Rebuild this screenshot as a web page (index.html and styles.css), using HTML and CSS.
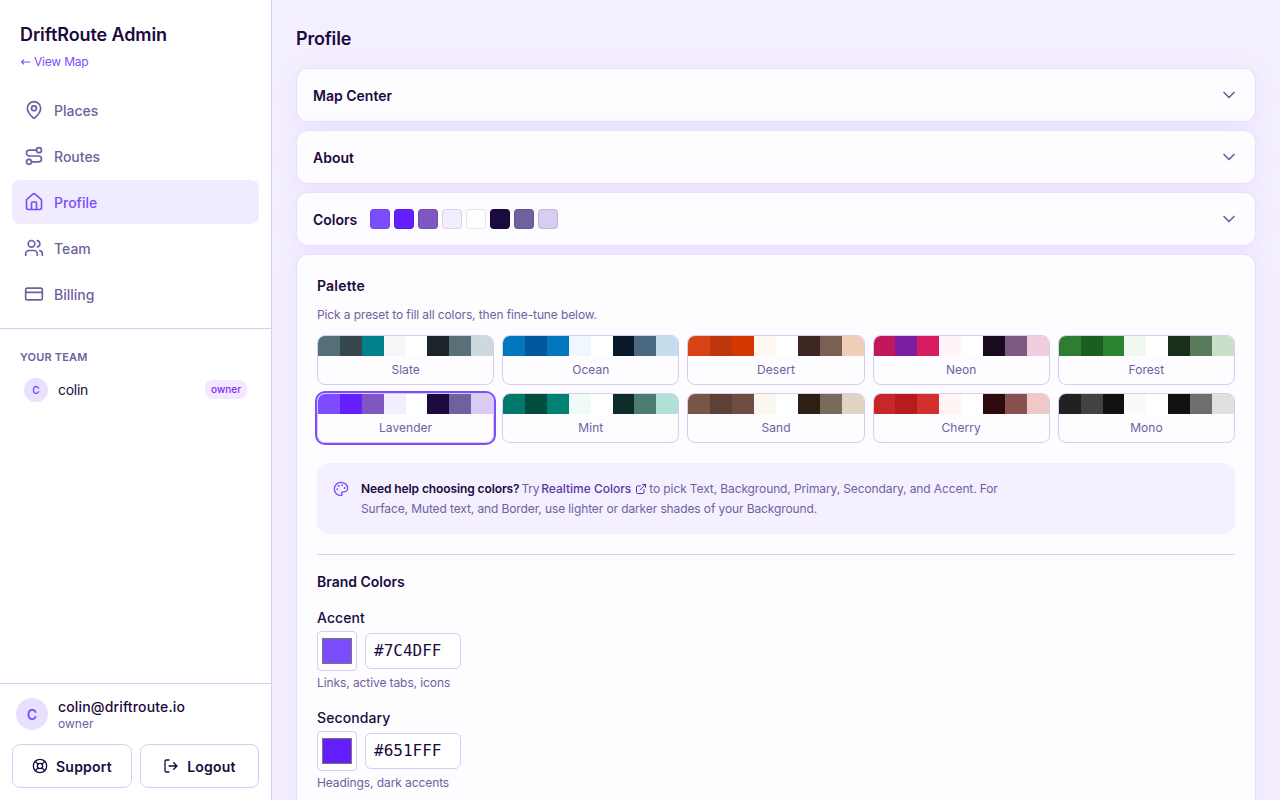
FILE: index.html
```html
<!DOCTYPE html>
<html lang="en">
<head>
<meta charset="utf-8">
<title>DriftRoute Admin</title>
<link rel="stylesheet" href="styles.css">
</head>
<body>
<div class="app">
  <aside class="sidebar">
    <header class="brand">
      <h1 class="brand-name">DriftRoute Admin</h1>
      <a class="view-map" href="#"><svg class="arrow" viewBox="0 0 11 10"><path d="M10.500 5H1.500M4 2.700 1.500 5 4 7.300"/></svg>View Map</a>
    </header>
    <nav class="nav">
      <a class="nav-item" href="#"><svg class="icon" viewBox="0 0 24 24"><path d="M20 10c0 4.993-5.539 10.193-7.399 11.799a1 1 0 0 1-1.202 0C9.539 20.193 4 14.993 4 10a8 8 0 0 1 16 0"/><circle cx="12" cy="10" r="3"/></svg>Places</a>
      <a class="nav-item" href="#"><svg class="icon" viewBox="0 0 24 24"><circle cx="6" cy="19" r="3"/><path d="M9 19h8.500a3.500 3.500 0 0 0 0-7h-11a3.500 3.500 0 0 1 0-7H15"/><circle cx="18" cy="5" r="3"/></svg>Routes</a>
      <a class="nav-item active" href="#"><svg class="icon" viewBox="0 0 24 24"><path d="M15 21v-8a1 1 0 0 0-1-1h-4a1 1 0 0 0-1 1v8"/><path d="M3 10a2 2 0 0 1 .709-1.528l7-5.999a2 2 0 0 1 2.582 0l7 5.999A2 2 0 0 1 21 10v9a2 2 0 0 1-2 2H5a2 2 0 0 1-2-2z"/></svg>Profile</a>
      <a class="nav-item" href="#"><svg class="icon" viewBox="0 0 24 24"><path d="M16 21v-2a4 4 0 0 0-4-4H6a4 4 0 0 0-4 4v2"/><circle cx="9" cy="7" r="4"/><path d="M22 21v-2a4 4 0 0 0-3-3.870M16 3.130a4 4 0 0 1 0 7.750"/></svg>Team</a>
      <a class="nav-item" href="#"><svg class="icon" viewBox="0 0 24 24"><rect x="2" y="5" width="20" height="14" rx="2"/><path d="M2 10h20"/></svg>Billing</a>
    </nav>
    <section class="team">
      <h2 class="team-title">YOUR TEAM</h2>
      <div class="member"><span class="avatar small">C</span><span class="member-name">colin</span><span class="badge">owner</span></div>
    </section>
    <footer class="account">
      <div class="user">
        <span class="avatar">C</span>
        <div class="user-text"><span class="email">colin@driftroute.io</span><span class="role">owner</span></div>
      </div>
      <div class="actions">
        <button class="btn"><svg class="icon sm" viewBox="0 0 24 24"><circle cx="12" cy="12" r="10"/><path d="m4.930 4.930 4.240 4.240M14.830 9.170l4.240-4.240M14.830 14.830l4.240 4.240M9.170 14.830l-4.240 4.240"/><circle cx="12" cy="12" r="4"/></svg>Support</button>
        <button class="btn"><svg class="icon sm" viewBox="0 0 24 24"><path d="M9 21H5a2 2 0 0 1-2-2V5a2 2 0 0 1 2-2h4M16 17l5-5-5-5M21 12H9"/></svg>Logout</button>
      </div>
    </footer>
  </aside>
  <main class="main">
    <h2 class="page-title">Profile</h2>
    <div class="stack">
      <div class="accordion"><span>Map Center</span><svg class="icon chev" viewBox="0 0 24 24"><path d="m6 9 6 6 6-6"/></svg></div>
      <div class="accordion"><span>About</span><svg class="icon chev" viewBox="0 0 24 24"><path d="m6 9 6 6 6-6"/></svg></div>
      <div class="accordion"><span>Colors</span><span class="chips" data-colors="#7c4dff #651fff #7e57c2 #f3eeff #ffffff #1a0a3e #7060a0 #d8ccf4"></span><svg class="icon chev" viewBox="0 0 24 24"><path d="m6 9 6 6 6-6"/></svg></div>
      <section class="panel">
        <h3 class="section-title">Palette</h3>
        <p class="hint">Pick a preset to fill all colors, then fine-tune below.</p>
        <div class="presets">
          <button class="preset"><span class="strip" data-colors="#546e7a #37474f #00808a #f5f7f8 #ffffff #1c2429 #5a7078 #cfd8dc"></span><span class="preset-name">Slate</span></button>
          <button class="preset"><span class="strip" data-colors="#0277bd #01579b #0277bd #f0f7ff #ffffff #0a1929 #4a6880 #c5dded"></span><span class="preset-name">Ocean</span></button>
          <button class="preset"><span class="strip" data-colors="#d84315 #bf360c #d63600 #fff8f0 #ffffff #3e2723 #7b5e54 #f0ceb8"></span><span class="preset-name">Desert</span></button>
          <button class="preset"><span class="strip" data-colors="#c2185b #7b1fa2 #d81b60 #fff5f9 #ffffff #1a0a1e #7d5a82 #f0cee0"></span><span class="preset-name">Neon</span></button>
          <button class="preset"><span class="strip" data-colors="#2e7d32 #1b5e20 #2a8432 #f1f8f2 #ffffff #1b2e1c #5a7a5c #c8e0c8"></span><span class="preset-name">Forest</span></button>
          <button class="preset selected"><span class="strip" data-colors="#7c4dff #651fff #7e57c2 #f3eeff #ffffff #1a0a3e #7060a0 #d8ccf4"></span><span class="preset-name">Lavender</span></button>
          <button class="preset"><span class="strip" data-colors="#00796b #004d40 #008272 #f0faf8 #ffffff #0d2b28 #4a7c70 #b2e0d6"></span><span class="preset-name">Mint</span></button>
          <button class="preset"><span class="strip" data-colors="#795548 #5d4037 #6d4c41 #faf7f0 #ffffff #2e1f16 #7a6a5c #e0d3c4"></span><span class="preset-name">Sand</span></button>
          <button class="preset"><span class="strip" data-colors="#c62828 #b71c1c #d32f2f #fff5f5 #ffffff #2c0a0e #8a5050 #f0c8c8"></span><span class="preset-name">Cherry</span></button>
          <button class="preset"><span class="strip" data-colors="#212121 #424242 #111111 #fafafa #ffffff #111111 #6e6e6e #e0e0e0"></span><span class="preset-name">Mono</span></button>
        </div>
        <div class="help">
          <svg class="icon sm help-icon" viewBox="0 0 24 24"><circle class="dot" cx="13.500" cy="6.500" r=".5"/><circle class="dot" cx="17.500" cy="10.500" r=".5"/><circle class="dot" cx="8.500" cy="7.500" r=".5"/><circle class="dot" cx="6.500" cy="12.500" r=".5"/><path d="M12 2C6.500 2 2 6.500 2 12s4.500 10 10 10c.926 0 1.648-.746 1.648-1.688 0-.437-.18-.835-.437-1.125-.29-.289-.438-.652-.438-1.125a1.640 1.640 0 0 1 1.668-1.668h1.996c3.051 0 5.555-2.503 5.555-5.554C21.965 6.012 17.461 2 12 2z"/></svg>
          <p class="help-text"><span class="lead"><strong>Need help choosing colors?</strong> Try <a class="link" href="#">Realtime Colors<svg class="icon ext" viewBox="0 0 24 24"><path d="M15 3h6v6M10 14 21 3M18 13v6a2 2 0 0 1-2 2H5a2 2 0 0 1-2-2V8a2 2 0 0 1 2-2h6"/></svg></a> </span>to pick Text, Background, Primary, Secondary, and Accent. For<br>Surface, Muted text, and Border, use lighter or darker shades of your Background.</p>
        </div>
        <hr class="rule">
        <h3 class="section-title">Brand Colors</h3>
        <div class="field">
          <label class="label">Accent</label>
          <div class="inputs"><span class="picker"><span class="well accent"></span></span><input class="hex" value="#7C4DFF"></div>
          <p class="note">Links, active tabs, icons</p>
        </div>
        <div class="field">
          <label class="label">Secondary</label>
          <div class="inputs"><span class="picker"><span class="well secondary"></span></span><input class="hex" value="#651FFF"></div>
          <p class="note">Headings, dark accents</p>
        </div>
      </section>
    </div>
  </main>
</div>
<script src="main.js"></script>
</body>
</html>
```
FILE: main.js
```js
// Fill each swatch row with its list of colours.
document.querySelectorAll('[data-colors]').forEach(function (row) {
  row.dataset.colors.split(' ').forEach(function (color) {
    var cell = document.createElement('i');
    cell.style.background = color;
    row.appendChild(cell);
  });
});
```
FILE: styles.css
```css
* { box-sizing: border-box; }
body { margin: 0; font-family: Inter, "Open Sans", sans-serif; font-size: 14px; color: #1a0a3e; background: #f4efff; overflow: hidden; }
h1, h2, h3, p { margin: 0; font-weight: 600; }
p { font-weight: 400; }
a { text-decoration: none; }
button, input { font: inherit; color: inherit; }
.icon { width: 20px; height: 20px; flex: none; fill: none; stroke: currentColor; stroke-width: 2; stroke-linecap: round; stroke-linejoin: round; }
.icon.sm { width: 16px; height: 16px; }
.app { display: flex; height: 800px; overflow: hidden; }

.sidebar { width: 272px; flex: none; display: flex; flex-direction: column; background: #fff; border-right: 1px solid #d8ccf4; }
.brand { padding: 21px 20px 0; height: 76px; }
.brand-name { font-size: 18px; line-height: 27px; letter-spacing: -.1px; }
.view-map { display: flex; align-items: center; gap: 3px; margin-top: 5px; font-size: 12px; line-height: 18px; letter-spacing: -.2px; color: #7c4dff; }
.arrow { width: 11px; height: 10px; fill: none; stroke: currentColor; stroke-width: 1.1; }
.nav { display: flex; flex-direction: column; gap: 2px; padding: 12px; border-bottom: 1px solid #d8ccf4; }
.nav-item { display: flex; align-items: center; gap: 10px; height: 44px; padding: 1px 12px 0; border-radius: 8px; font-weight: 500; color: #7060a0; }
.nav-item .icon { margin-top: -2px; }
.active { color: #7c4dff; background: #f1ebff; }
.team { padding: 20px 12px; }
.team-title { padding: 0 8px; font-size: 11px; line-height: 16px; letter-spacing: .17px; color: #7060a0; }
.member { display: flex; align-items: center; gap: 10px; margin-top: 13px; padding: 0 12px; height: 24px; }
.member-name { flex: 1; margin-top: -2px; letter-spacing: -.28px; }
.badge { height: 19px; margin-top: -1px; padding: 0 6px; border-radius: 8px; background: #f3e8ff; color: #7c2fef; font-size: 10px; line-height: 19px; font-weight: 500; }
.avatar { display: grid; place-items: center; flex: none; width: 32px; height: 32px; border-radius: 50%; background: #e8e0ff; color: #7c4dff; font-weight: 600; }
.avatar.small { width: 24px; height: 24px; padding-bottom: 1px; font-size: 10px; }
.account { margin-top: auto; height: 117px; padding: 14px 12px 12px; border-top: 1px solid #d8ccf4; }
.user { display: flex; gap: 10px; padding: 0 4px; }
.user-text { display: flex; flex-direction: column; }
.email { font-weight: 500; line-height: 18px; letter-spacing: .15px; }
.role { font-size: 12px; line-height: 16px; color: #7060a0; }
.actions { display: flex; gap: 8px; margin-top: 12px; }
.btn { display: flex; align-items: center; justify-content: center; gap: 8px; width: 120px; height: 44px; padding: 1px 0 0; background: #fff; border: 1px solid #d8ccf4; border-radius: 8px; font-weight: 600; letter-spacing: .22px; }
.btn + .btn { width: 119px; }
.btn .icon { margin-top: -2px; }

.main { flex: 1; padding: 24px; }
.page-title { padding-top: 1px; font-size: 18px; line-height: 27px; letter-spacing: -.2px; }
.stack { display: flex; flex-direction: column; gap: 8px; margin-top: 16px; }
.accordion, .panel { flex: none; border: 1px solid #e9e0fc; border-radius: 12px; background: #fdfcff; box-shadow: 0 2px 24px rgba(124, 77, 255, .08); }
.accordion { display: flex; align-items: center; height: 54px; padding: 0 16px; font-weight: 600; }
.chev { margin: 0 0 0 auto; color: #7060a0; }
.chips { display: flex; gap: 4px; margin-left: 13px; }
.chips i { width: 20px; height: 20px; border: 1px solid rgba(0, 0, 0, .1); border-radius: 4px; }
.panel { height: 700px; padding: 20px; }
.section-title { font-size: 14px; line-height: 21px; letter-spacing: .2px; }
.hint { margin-top: 10px; font-size: 12px; line-height: 18px; letter-spacing: -.11px; color: #7060a0; }
.presets { display: grid; grid-template-columns: repeat(5, 1fr); gap: 8px; margin-top: 11px; }
.preset { display: flex; flex-direction: column; height: 50px; padding: 0; overflow: hidden; border: 1px solid #d8ccf4; border-radius: 8px; background: #fdfcff; }
.selected { outline: 2px solid #7c4dff; }
.strip { display: flex; width: 100%; height: 20px; }
.strip i { flex: 0 0 12.49%; }
.strip i:last-child { flex: 1; }
.preset-name { width: 100%; font-size: 12px; line-height: 27px; letter-spacing: .05px; text-align: center; color: #7060a0; }
.help { display: flex; gap: 12px; height: 71px; margin-top: 20px; padding: 16px; border-radius: 12px; background: #f4f0ff; }
.help-icon { margin-top: 2px; color: #7c4dff; }
.dot { fill: currentColor; }
.help-text { font-size: 12px; line-height: 19.5px; letter-spacing: -.11px; white-space: nowrap; color: #7060a0; }
.lead { letter-spacing: -.3px; word-spacing: -1px; }
.help-text strong { font-weight: 600; letter-spacing: -.1px; word-spacing: 0; color: #1a0a3e; }
.link { color: #5e35a8; font-weight: 500; letter-spacing: -.02px; word-spacing: 0; }
.icon.ext { width: 12px; height: 12px; margin-left: 4px; vertical-align: -2px; }
.rule { height: 1px; margin: 20px 0 16px; border: 0; background: #d8ccf4; }
.rule + .section-title { letter-spacing: 0; }
.field { height: 100px; padding-top: 15px; }
.label { display: block; line-height: 21px; font-weight: 500; letter-spacing: .1px; }
.inputs { display: flex; align-items: center; gap: 8px; margin-top: 3px; }
.picker { display: grid; place-items: center; width: 40px; height: 40px; border: 1px solid #d8ccf4; border-radius: 4px; background: #fff; }
.well { width: 30px; height: 26px; border: 1px solid #777; }
.accent { background: #7c4dff; }
.secondary { background: #651fff; }
.hex { width: 96px; height: 36px; padding: 0 8px 2px; border: 1px solid #d8ccf4; border-radius: 6px; background: #fff; font: 16px "DejaVu Sans Mono", monospace; }
.note { margin-top: 3px; font-size: 12px; line-height: 18px; letter-spacing: -.09px; color: #7060a0; }
```
